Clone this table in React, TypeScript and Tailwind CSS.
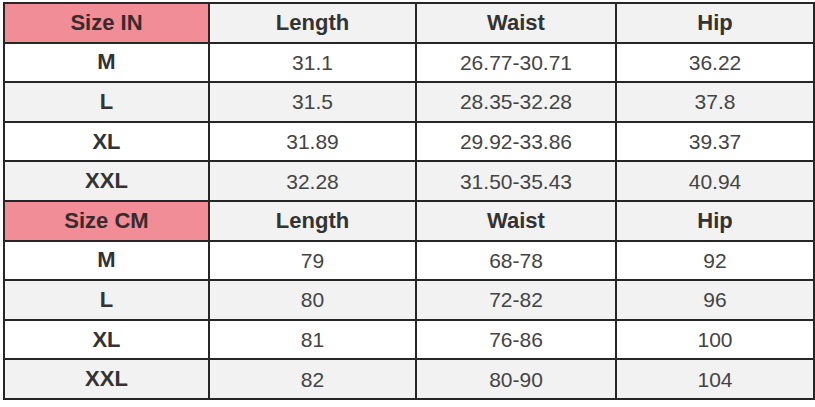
const IN_ROWS = [
  ["M", "31.1", "26.77-30.71", "36.22"],
  ["L", "31.5", "28.35-32.28", "37.8"],
  ["XL", "31.89", "29.92-33.86", "39.37"],
  ["XXL", "32.28", "31.50-35.43", "40.94"],
];

const CM_ROWS = [
  ["M", "79", "68-78", "92"],
  ["L", "80", "72-82", "96"],
  ["XL", "81", "76-86", "100"],
  ["XXL", "82", "80-90", "104"],
];

function HeaderRow({ label }: { label: string }) {
  return (
    <tr className="h-[39.6px]">
      <th className="border-2 border-[#262626] bg-[#f08d96] text-[#3a2a2d] text-[22px] font-bold">{label}</th>
      {["Length", "Waist", "Hip"].map((h) => (
        <th key={h} className="border-2 border-[#262626] bg-[#f2f2f2] text-[#333] text-[22px] font-bold">{h}</th>
      ))}
    </tr>
  );
}

function DataRows({ rows }: { rows: string[][] }) {
  return (
    <>
      {rows.map((r, i) => (
        <tr key={r[0]} className={i % 2 === 0 ? "h-[39.6px] bg-white" : "h-[39.6px] bg-[#f2f2f2]"}>
          <td className="border-2 border-[#262626] text-[#333] text-[22px] font-bold">{r[0]}</td>
          {r.slice(1).map((v, j) => (
            <td key={j} className="border-2 border-[#262626] text-[#444] text-[21px]">{v}</td>
          ))}
        </tr>
      ))}
    </>
  );
}

export default function App() {
  return (
    <div className="w-[815px] h-[407px] bg-white pt-[2px] pl-[3px]" style={{ fontFamily: '"Liberation Sans", Arial, sans-serif' }}>
      <table className="border-collapse table-fixed w-[810px] text-center leading-none">
        <colgroup>
          <col className="w-[205px]" />
          <col className="w-[207px]" />
          <col className="w-[200px]" />
          <col className="w-[198px]" />
        </colgroup>
        <tbody>
          <HeaderRow label="Size IN" />
          <DataRows rows={IN_ROWS} />
          <HeaderRow label="Size CM" />
          <DataRows rows={CM_ROWS} />
        </tbody>
      </table>
    </div>
  );
}
